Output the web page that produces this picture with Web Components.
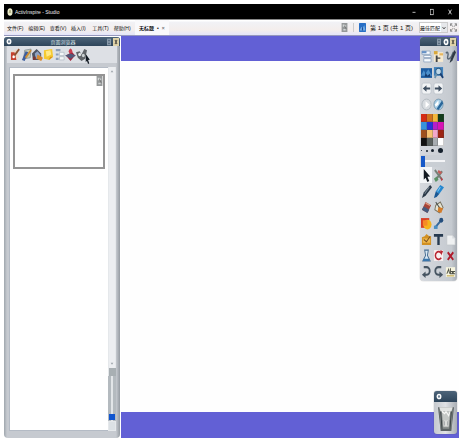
<!DOCTYPE html>
<html lang="zh-CN">
<head>
<meta charset="utf-8">
<title>ActivInspire - Studio</title>
<style>
body{margin:4px;background:#fff;font-family:"Liberation Sans","Noto Sans CJK SC",sans-serif;font-size:5px;color:#111}
</style>
</head>
<body>
<studio-app></studio-app>
<script>
const ICONS = {
logo:'<ellipse cx="6" cy="6" rx="5" ry="5.6" fill="#f2f2d2"/><path d="M4 8l2-5 2 5M5 6.5h2" stroke="#8b8b58" fill="none"/>',
min:'<path d="M3 6.5h6" stroke="#ddd" stroke-width="1.4"/>',
max:'<rect x="3" y="2" width="6" height="8" fill="none" stroke="#ddd" stroke-width="1.2"/>',
close:'<path d="M3 2.5l6 7M9 2.5l-6 7" stroke="#eee" stroke-width="1.4"/>',
gear:'<circle cx="6" cy="6" r="3.6" fill="#6d8194" stroke="#fff" stroke-width="2.6"/>',
pin:'<rect x="2" y="1" width="8" height="10" fill="#8798a8"/><path d="M4 3h4v2H4zM4 7h4v2H4z" fill="#5b6f82"/>',
shut:'<rect width="12" height="12" fill="#e0d3a8"/><path d="M4 3l4 6M8 3L4 9" stroke="#4c4a42" stroke-width="2"/>',
note:'<rect x="1" y="0" width="10" height="12" fill="#96999a"/><path d="M3 2h3v3H3zM7 3h2v2H7zM4 8h4v2H4z" fill="#d0d4d4"/><path d="M6 4l3 4" stroke="#686868"/>',
blue:'<rect width="12" height="12" rx="1" fill="#286fc5"/><path d="M1 10l3-5 2 2 3-4 2 7z" fill="#75aee4"/><path d="M5 10V6h2v4z" fill="#1d4c9a"/>',
fit:'<path d="M1 1l4 4M11 1L7 5M1 11l4-4M11 11L7 7M1 4V1h3M8 1h3v3M1 8v3h3M8 11h3V8" fill="none" stroke="#777" stroke-width="1.2"/>',
resource:'<path d="M1 3l7-2 2 8-7 2z" fill="#ead9cc"/><path d="M1 4h4l2 7H1z" fill="#c5402e"/><path d="M4 8l6-7" stroke="#8d5130" stroke-width="2"/><circle cx="4" cy="8" r="1.4" fill="#fff"/>',
object:'<path d="M4 2l7-1-1 8-7 1z" fill="#c5cbb0" stroke="#7c8791" stroke-width=".7"/><path d="M1 11l4-8 3 1-4 8z" fill="#3e5f9e"/><path d="M5 9l6-7" stroke="#cf8e31" stroke-width="1.8"/>',
home:'<path d="M0 5l5-4 5 4v6H1z" fill="#4c5363"/><path d="M3 5l3-2 3 3v4H4z" fill="#8fa3c4"/><path d="M6 6l6 3-2 3-5-2z" fill="#d6882f"/><path d="M1 8h3v3H1z" fill="#7a3734"/>',
yellow:'<path d="M1 2l9-1 1 7-4 3-6-1z" fill="#f5c931"/><path d="M3 3l5-1 1 4-5 2z" fill="#ffe987"/><path d="M6 11l2-3 3 0z" fill="#d98e1b"/>',
list:'<path d="M2 1h5v2H2zM2 5h3v2H2zM2 9h3v2H2z" fill="#8b9db8"/><path d="M6 4h5v3H6zM6 8h5v3H6z" fill="#f4f6f8" stroke="#a5afbb" stroke-width=".6"/>',
vote:'<path d="M6 0l2 4 3 3-5 5-5-5 4-2z" fill="#a3233a"/><path d="M0 7l6-2 6 2-6 3z" fill="#525979"/><circle cx="6" cy="3" r="2" fill="#cc3f50"/>',
device:'<path d="M0 4l4-1 2 3 3-5 3 1-2 8-4 2-4-3z" fill="#616569"/><circle cx="4" cy="6" r="1.6" fill="#e5e7e8"/><circle cx="8" cy="7" r="1.6" fill="#cbd0d2"/>',
menu:'<path d="M1 1h9v3H1zM3 5h8v2H3zM3 8h8v3H3z" fill="#f8fbff" stroke="#8199b8" stroke-width=".7"/><path d="M1 1h5v2H1z" fill="#6691c5"/>',
profile:'<path d="M1 2h10v9H1z" fill="#f6ead0"/><path d="M1 1h4v3H1z" fill="#d9a83b"/><path d="M3 5h2v2h3v1H5v3H3z" fill="#424447"/><path d="M7 3h4v2H7z" fill="#e7b65d"/>',
ink:'<path d="M1 3c2-2 3 0 2 3s2 3 4 0l2-4" fill="none" stroke="#596673" stroke-width="1.5"/><path d="M10 0L6 9l-1 3 3-2 4-8z" fill="#2e3a45"/>',
desktop:'<path d="M0 2h12v9H0z" fill="#1d5ca1"/><path d="M0 9l3-5 2 3 3-4 4 6z" fill="#4b8fcb"/><path d="M5 6l2 3 3-2v3H4z" fill="#153c70"/>',
zoom:'<path d="M1 1h10v8H1z" fill="#4081bb"/><circle cx="6" cy="5" r="3" fill="#bfd8e8" stroke="#275986"/><path d="M8 7l3 4" stroke="#183f73" stroke-width="2"/><path d="M2 11l2-4" stroke="#6a92ae" stroke-width="2"/>',
prev:'<rect x="1" y="1" width="10" height="10" rx="2" fill="#f1f3f5" stroke="#b5bdc4" stroke-width=".6"/><path d="M2 6l4-3v2h4v2H6v2z" fill="#3e4e60"/>',
next:'<rect x="1" y="1" width="10" height="10" rx="2" fill="#f1f3f5" stroke="#b5bdc4" stroke-width=".6"/><path d="M10 6L6 3v2H2v2h4v2z" fill="#3e4e60"/>',
play:'<circle cx="6" cy="6" r="5" fill="#d9dde1" stroke="#aab2b9" stroke-width=".8"/><path d="M5 3l4 3-4 3z" fill="#fff"/>',
disc:'<circle cx="6" cy="6" r="5" fill="#a6cde6" stroke="#64869f" stroke-width=".7"/><path d="M4 10l6-8 1 3-5 6z" fill="#29669a"/><path d="M2 6l4-4v4l-3 2z" fill="#fff"/>',
cursor:'<path d="M3 0l7 7-3 .2L9 11l-2 1-2-4-2 2z" fill="#111820"/>',
tools:'<path d="M2 1l8 9M10 2l-7 8" stroke="#748077" stroke-width="2"/><path d="M6 1l4 2-2 2-3-2z" fill="#c35d5a"/><path d="M1 9l3-2 2 3-3 2z" fill="#599365"/><path d="M8 7l3 3-2 1z" fill="#b93b45"/>',
pen:'<path d="M10 0l2 2-7 8-4 2 2-5z" fill="#293746"/><path d="M9 2L4 8" stroke="#788693"/>',
marker:'<path d="M8 0l4 2-5 6-4-2z" fill="#2587cf"/><path d="M3 6l4 2-3 3-3 1z" fill="#175794"/><path d="M8 2L5 6" stroke="#8acaf0"/>',
eraser:'<path d="M5 1l6 3-4 7-6-3z" fill="#a74539"/><path d="M1 8l2-3 6 3-2 3z" fill="#465b7e"/><path d="M5 2l5 2" stroke="#e19a80" stroke-width="1.3"/>',
fill:'<path d="M3 4l5-3 3 5-4 5-5-3z" fill="#e3e3d3" stroke="#777260"/><path d="M6 5l5 2-2 4-4-1z" fill="#d47c29"/><path d="M3 1l4 5" stroke="#454b48"/>',
shape:'<rect x="0" y="1" width="9" height="9" fill="#d83e27"/><circle cx="7" cy="7" r="4.5" fill="#f5b31e"/><path d="M2 3h5v5H2z" fill="#f58a28"/>',
connect:'<path d="M3 9l6-6" stroke="#36699b" stroke-width="2"/><circle cx="9" cy="3" r="2.2" fill="#244e7d"/><rect x="1" y="8" width="4" height="3" fill="#478dc3"/>',
camera:'<path d="M1 4l3-1 2-2 3 2h2v8H1z" fill="#d19024"/><path d="M2 5h8v4H2z" fill="#f0b94d"/><path d="M3 6l3 2 4-5" stroke="#7d5223" fill="none"/>',
text:'<path d="M1 1h10v2.500H7.300V11H4.700V3.500H1z" fill="#263a50"/>',
page:'<path d="M2 2h6l3 3v6H2z" fill="#eff1f2" stroke="#bfc4c8" stroke-width=".6"/><path d="M8 2v3h3" fill="#d7dadd"/>',
clear:'<path d="M4 1h4L7 6l3 5H2l3-5z" fill="#d8e8f4" stroke="#446b91"/><path d="M3 9h6v2H2z" fill="#3976ad"/>',
reset:'<path d="M1 1h10v10H1z" fill="#f9efef"/><path d="M9 4a3.500 3.500 0 1 0 0 4" fill="none" stroke="#b92632" stroke-width="1.6"/><path d="M8 1l3 1-2 4z" fill="#b92632"/>',
del:'<path d="M3 3l6 7M9 3l-6 7" stroke="#b01b2c" stroke-width="2"/>',
undo:'<path d="M3 2h3a3 3 0 0 1 0 7H4" fill="none" stroke="#465461" stroke-width="2"/><path d="M5 6v6L1 9z" fill="#465461"/>',
redo:'<path d="M9 2H6a3 3 0 0 0 0 7h2" fill="none" stroke="#465461" stroke-width="2"/><path d="M7 6v6l4-3z" fill="#465461"/>',
word:'<path d="M1 2h10v9H1z" fill="#f6f4de"/><path d="M2 8l2-4 1 4M6 3v5h2V6H6M11 6H9v2h2" fill="none" stroke="#515347"/><path d="M2 10h8" stroke="#c3a850"/>',
trash:'<path d="M0 1h12l-2 11H2z" fill="#5c6365"/><path d="M1 1h10l-1 10H2z" fill="#8b908f"/><path d="M1 1h10l-1 2H2z" fill="#e3e5e3"/><path d="M3 3h6l-.500 4h-5z" fill="#c4c8c5"/><path d="M3 3l2 1 1-1 2 2 1-2" stroke="#f7f8f6" stroke-width=".7" fill="none"/><path d="M2 3l1 8M10 3L9 11" stroke="#3d4547" stroke-width=".8"/><path d="M4 7h4v3H4z" fill="#dcdedc"/><path d="M5 7.500v2M7 7.500v2" stroke="#92979a" stroke-width=".5"/>',
up:'<path d="M6 3l4 5H2z" fill="#9ca3aa"/>',
down:'<path d="M6 9l4-5H2z" fill="#9ca3aa"/>'
};
const BTN='button{display:grid;place-items:center;padding:0;margin:0;border:0;background:none;font:inherit;color:inherit;min-width:0}';
const define=(name,html,setup)=>customElements.define(name,class extends HTMLElement{
  connectedCallback(){
    if(this.shadowRoot)return;
    this.attachShadow({mode:'open'}).innerHTML=typeof html==='function'?html(this):html;
    if(setup)setup(this);
  }
});
const tool=(icon,label,cls='')=>`<button class="${cls}" aria-label="${label}"><ui-icon name="${icon}"></ui-icon></button>`;

define('ui-icon',el=>`<style>:host{display:block;width:var(--w,11px);height:var(--h,13px)}svg{display:block;width:100%;height:100%}</style><svg viewBox="0 0 12 12" preserveAspectRatio="none" aria-hidden="true">${ICONS[el.getAttribute('name')]}</svg>`);

define('title-bar',`<style>${BTN}
:host{display:flex;align-items:center;height:15px;background:#000;color:#eee;padding:0 0 0 3px;gap:2px;--w:6px;--h:8px}
span{flex:1}nav{display:flex}button{width:18px;height:15px}</style>
<ui-icon name="logo"></ui-icon><span>ActivInspire - Studio</span>
<nav>${tool('min','最小化')}${tool('max','最大化')}${tool('close','关闭')}</nav>`);

define('menu-bar',`<style>${BTN}
:host{display:flex;align-items:center;height:15px;background:linear-gradient(#fff 0 1px,#f1f2f6 2px,#f4eeec 10px,#e4e6fa);border-top:1px solid #888;border-bottom:1px solid #9698bd}
nav{display:grid;grid-template-columns:repeat(6,minmax(0,1fr));width:128px;padding-left:3px;color:#111}
nav button{justify-content:start;white-space:nowrap;height:15px}
.tab{display:flex;align-items:center;gap:3px;height:15px;padding:0 4px;background:#f9f9fb;font-weight:bold;white-space:nowrap}
.tab button{color:#777}
.space{flex:1}
.right{display:flex;align-items:center;--w:7px;--h:9px;white-space:nowrap}
i{width:1px;height:9px;background:#ccc;margin:0 5px}
output{font-size:6px;margin:0 6px 0 4px}
.pick{display:flex;align-items:center;height:11px;background:#fff;border:1px solid #ccc;box-sizing:border-box;width:29px;position:relative}
select{appearance:none;width:100%;height:9px;border:0;padding:0;margin:0;background:none;font:inherit;color:#111}
.pick svg{position:absolute;right:0;top:0;width:6px;height:9px;background:#e6e8eb;pointer-events:none}
.fit{margin:0 2px}</style>
<nav>${['文件(F)','编辑(E)','查看(V)','插入(I)','工具(T)','帮助(H)'].map(t=>`<button>${t}</button>`).join('')}</nav>
<div class="tab"><span>无标题</span><span>•</span><button aria-label="关闭标签">×</button></div>
<div class="space"></div>
<div class="right">${tool('note','页面注释')}<i></i>${tool('blue','页面浏览器')}
<output>第 1 页 (共 1 页)</output>
<div class="pick"><select aria-label="缩放"><option>最佳匹配</option></select><svg viewBox="0 0 6 9" aria-hidden="true"><path d="M1.500 4l1.500 2 1.500-2" fill="none" stroke="#666"/></svg></div>
${tool('fit','全屏','fit')}</div>`);

define('panel-head',`<style>
:host{display:flex;align-items:center;height:9px;padding:0 1px 0 2px;background:linear-gradient(#4d6479,#2e455a);border-radius:3px 3px 0 0;color:#dbe3e9;--w:6px;--h:7px}
span{flex:1;text-align:center;white-space:nowrap}::slotted([slot=start]){margin-right:8px}div{display:flex;gap:1px;--h:8px}</style>
<slot name="start"></slot><span><slot></slot></span><div><slot name="end"></slot></div>`);

define('page-browser',`<style>${BTN}
:host{display:flex;flex-direction:column;box-sizing:border-box;background:linear-gradient(90deg,#9fa6ad,#c6cad0 3px,#c6cad0 calc(100% - 4px),#959ba2);border-radius:3px 3px 4px 4px;padding-bottom:7px;position:relative}
.bar{display:flex;height:17px;align-items:center;padding:0 3px;margin:0 3px;background:#dde0e5;--w:11px;--h:13px}
.body{flex:1;display:grid;grid-template-columns:1fr 8px;margin:4px 4px 0 5px;min-height:0}
.list{background:#fff;border:1px solid #b4bbc5;border-right:0;padding:6px 3px}
.thumb{width:100%;height:95px;box-sizing:border-box;border:2px solid #949494;background:#fff;--w:7px;--h:10px;place-items:start end}
.rail{display:flex;flex-direction:column;align-items:center;background:#e5e8eb;--w:4px;--h:5px}
.scroll{flex:1;width:6px;display:flex;flex-direction:column;justify-content:space-between;align-items:center;background:#eceef1;padding:2px 0}
.block{width:7px;height:8px;background:#a8afb3}
input{appearance:none;writing-mode:vertical-lr;direction:rtl;width:8px;height:45px;margin:0;background:linear-gradient(90deg,#b4babf 3px,#e2e5e8 3px 5px,#b4babf 5px)}
input::-webkit-slider-thumb{appearance:none;width:6px;height:6px;background:#1155cf;border:0}
.end{width:6px;height:8px;background:#dce1e5;margin:1px}
.pointer{position:absolute;left:80px;top:17px;--w:7px;--h:10px}</style>
<panel-head><ui-icon slot="start" name="gear"></ui-icon>页面浏览器<ui-icon slot="end" name="pin"></ui-icon><ui-icon slot="end" name="shut"></ui-icon></panel-head>
<div class="bar">${tool('resource','资源浏览器')}${tool('object','对象浏览器')}${tool('home','页面浏览器')}${tool('yellow','注释浏览器')}${tool('list','属性浏览器')}${tool('vote','动作浏览器')}${tool('device','表决浏览器')}</div>
<div class="body"><div class="list"><button class="thumb" aria-label="第 1 页"><ui-icon name="note"></ui-icon></button></div>
<div class="rail"><div class="scroll"><ui-icon name="up"></ui-icon><ui-icon name="down"></ui-icon></div><div class="block"></div><input type="range" aria-label="缩略图大小" value="2"><div class="end"></div></div></div>
<ui-icon class="pointer" name="cursor"></ui-icon>`);

const COLORS=['#d42b14','#d0721d','#f2b73c','#123c1c','#3792dd','#2633d9','#b51ec8','#d614b5','#9e501e','#f6c374','#f2a8cb','#9c2413','#111','#59605e','#a7acb0','#fff'];
define('tool-box',`<style>${BTN}
:host{display:block;width:37px;box-sizing:border-box;background:linear-gradient(90deg,#d6d9de,#c5cad0 85%,#a5abb2);border-radius:3px 3px 4px 4px;padding-bottom:2px;box-shadow:0 0 1px #777}
.grid{display:grid;grid-template-columns:repeat(3,12px);grid-auto-rows:16px}
.first{padding-top:2px}
.a{grid-column:1}.sel{background:#f4f6f8}
.colors{display:grid;grid-template-columns:repeat(4,1fr);grid-auto-rows:8px;width:23px;margin:2px 0 0 1px}
.colors button{border:solid #4444;border-width:0 1px 1px 0}
.widths{display:flex;align-items:center;justify-content:space-between;width:22px;height:9px;padding-left:1px}
.widths i{display:block;border-radius:50%;background:#15202c}
input{appearance:none;display:block;width:24px;height:12px;margin:0 1px;background:linear-gradient(#c9ced4 5px,#f4f5f7 5px 7px,#c9ced4 7px)}
input::-webkit-slider-thumb{appearance:none;width:4px;height:11px;background:#1558c8;border:0}</style>
<panel-head><ui-icon slot="end" name="pin"></ui-icon><ui-icon slot="end" name="gear"></ui-icon><ui-icon slot="end" name="shut"></ui-icon></panel-head>
<div class="grid first">${tool('menu','主菜单')}${tool('profile','切换配置文件')}${tool('ink','桌面批注')}
${tool('desktop','桌面工具','a')}${tool('zoom','页面缩放')}${tool('prev','上一页','a')}${tool('next','下一页')}${tool('play','开始表决','a')}${tool('disc','快速表决')}</div>
<div class="colors">${COLORS.map(c=>`<button style="background:${c}" aria-label="${c}"></button>`).join('')}</div>
<div class="widths">${[1,2,3,5].map(n=>`<button aria-label="笔宽 ${n}"><i style="width:${n}px;height:${n}px"></i></button>`).join('')}</div>
<input type="range" aria-label="笔宽" value="0">
<div class="grid">${tool('cursor','选择','sel')}${tool('tools','工具')}${tool('pen','笔','a')}${tool('marker','荧光笔')}${tool('eraser','橡皮擦','a')}${tool('fill','填充')}${tool('shape','形状','a')}${tool('connect','连接线')}${tool('camera','媒体','a')}${tool('text','文本')}${tool('page','新页面')}${tool('clear','清除')}${tool('reset','重置页面')}${tool('del','删除')}${tool('undo','撤消')}${tool('redo','重做')}${tool('word','文字识别')}</div>`);

define('trash-box',`<style>${BTN}
:host{display:block;width:23px;background:linear-gradient(90deg,#c5c9ce,#e0e2e5,#a8adb3);border-radius:3px;box-shadow:0 0 1px #555;--w:16px;--h:26px}
panel-head{height:11px}button{width:23px;height:32px}</style>
<panel-head><ui-icon slot="start" name="gear"></ui-icon></panel-head>${tool('trash','垃圾桶')}`);

define('flip-chart',`<style>
:host{display:flex;flex-direction:column;position:relative;background:#6260d5;padding:25px 0 26px}
main{flex:1;background:#fefefe}
tool-box{position:absolute;right:2px;top:1px}
trash-box{position:absolute;right:2px;bottom:4px}</style>
<main></main><tool-box></tool-box><trash-box></trash-box>`);

define('studio-app',`<style>
:host{display:flex;flex-direction:column;min-height:calc(100vh - 8px)}
.work{flex:1;display:grid;grid-template-columns:117px minmax(0,1fr)}
page-browser{margin:1px 1px 0 0}</style>
<title-bar></title-bar><menu-bar></menu-bar><div class="work"><page-browser></page-browser><flip-chart></flip-chart></div>`);
</script>
</body>
</html>
